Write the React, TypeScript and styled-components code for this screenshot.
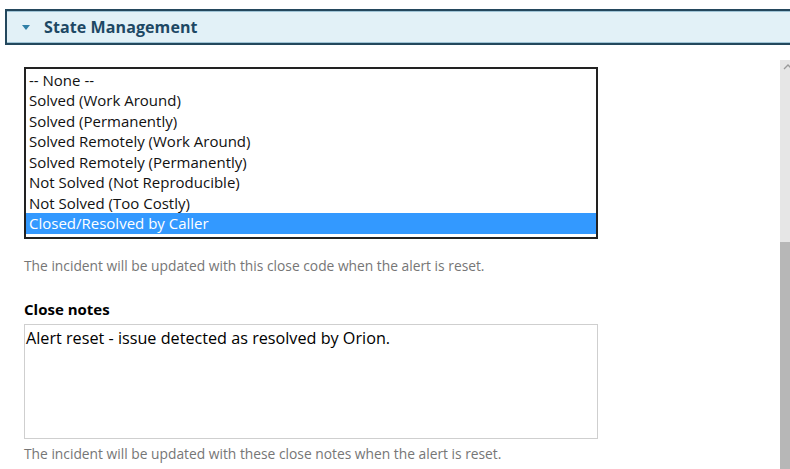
import styled, { createGlobalStyle } from "styled-components";

const GlobalStyle = createGlobalStyle`
  html, body {
    margin: 0;
    padding: 0;
    background: #ffffff;
    overflow: hidden;
    font-family: "Open Sans", "Noto Sans", sans-serif;
  }
`;

const options = [
  "-- None --",
  "Solved (Work Around)",
  "Solved (Permanently)",
  "Solved Remotely (Work Around)",
  "Solved Remotely (Permanently)",
  "Not Solved (Not Reproducible)",
  "Not Solved (Too Costly)",
  "Closed/Resolved by Caller",
];

const App = () => {
  return (
    <Page>
      <GlobalStyle />
      <SectionHeader>
        <Caret viewBox="0 0 8 5">
          <path d="M0 0 L8 0 L4 5 Z" fill="#2f7fa6" />
        </Caret>
        <Title>State Management</Title>
      </SectionHeader>

      <Body>
        <Content>
          <ListBox role="listbox">
            {options.map((o, i) => (
              <Option key={o} selected={i === options.length - 1}>
                {o}
              </Option>
            ))}
          </ListBox>
          <Help>The incident will be updated with this close code when the alert is reset.</Help>

          <Label>Close notes</Label>
          <Notes defaultValue="Alert reset - issue detected as resolved by Orion." />
          <Help tight>The incident will be updated with these close notes when the alert is reset.</Help>
        </Content>

        <Scrollbar>
          <ArrowUp viewBox="0 0 10 6">
            <path d="M1 5 L5 1 L9 5" stroke="#9a9a9a" strokeWidth="1.3" fill="none" />
          </ArrowUp>
          <Thumb />
        </Scrollbar>
      </Body>
    </Page>
  );
};

export default App;

const Page = styled.div`
  width: 100%;
  height: 469px;
  padding: 9px 0 0 5px;
  box-sizing: border-box;
  display: flex;
  flex-direction: column;
  overflow: hidden;
`;

const SectionHeader = styled.div`
  width: calc(100% + 10px);
  height: 36px;
  box-sizing: border-box;
  flex-shrink: 0;
  display: flex;
  align-items: center;
  background: #e2f1f7;
  border: 2px solid #24485d;
  border-right: none;
  box-shadow: inset 0 1px 0 #9fc4d6, inset 0 -1px 0 #9fc4d6;
  padding-left: 15px;
`;

const Caret = styled.svg`
  width: 8px;
  height: 5px;
  margin-top: 1px;
`;

const Title = styled.span`
  margin-left: 14px;
  font-size: 16px;
  font-weight: 700;
  color: #1d4864;
  letter-spacing: 0.1px;
`;

const Body = styled.div`
  flex: 1;
  margin-top: 15px;
  display: flex;
  min-height: 0;
`;

const Content = styled.div`
  flex: 1;
  padding: 7px 0 0 19px;
  display: flex;
  flex-direction: column;
`;

const ListBox = styled.div`
  width: 574px;
  height: 172px;
  box-sizing: border-box;
  border: 2px solid #222222;
  padding-top: 0.5px;
  display: flex;
  flex-direction: column;
`;

const Option = styled.div<{ selected?: boolean }>`
  height: 20.5px;
  line-height: 20.5px;
  padding-left: 3px;
  font-size: 15px;
  color: ${(p) => (p.selected ? "#ffffff" : "#111111")};
  background: ${(p) => (p.selected ? "#3399ff" : "transparent")};
  white-space: nowrap;
`;

const Help = styled.div<{ tight?: boolean }>`
  margin-top: ${(p) => (p.tight ? "6px" : "18px")};
  font-size: 13.8px;
  line-height: 18px;
  color: #767676;
  white-space: nowrap;
`;

const Label = styled.div`
  margin-top: 25px;
  font-size: 15px;
  line-height: 19px;
  font-weight: 700;
  color: #000000;
`;

const Notes = styled.textarea`
  margin-top: 5px;
  width: 574px;
  height: 115px;
  box-sizing: border-box;
  border: 1px solid #cfcfcf;
  padding: 2px 1px;
  font-family: "Open Sans", "Noto Sans", sans-serif;
  font-size: 16.2px;
  line-height: 22px;
  color: #000000;
  resize: none;
  outline: none;
`;

const Scrollbar = styled.div`
  width: 15px;
  margin-right: -5px;
  flex-shrink: 0;
  background: #e6e6e6;
  display: flex;
  flex-direction: column;
`;

const ArrowUp = styled.svg`
  width: 10px;
  height: 6px;
  margin: 4px 0 0 3px;
`;

const Thumb = styled.div`
  margin-top: auto;
  height: 227px;
  background: #b7b7b7;
`;
